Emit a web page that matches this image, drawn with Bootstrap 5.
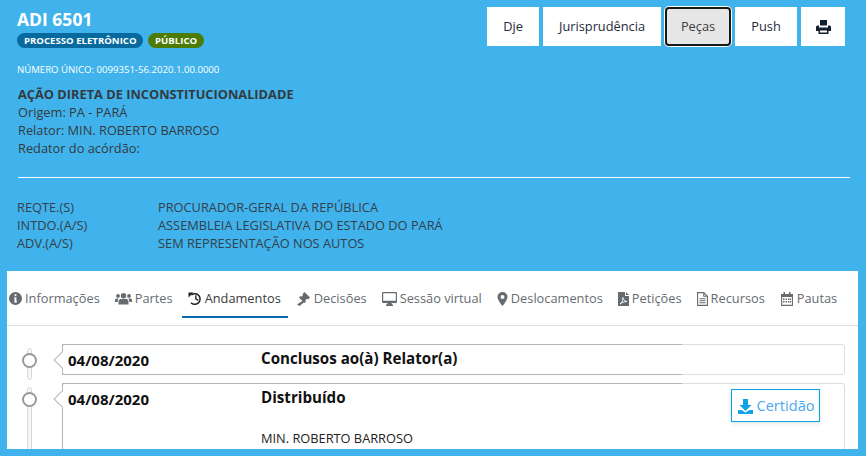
<!DOCTYPE html>
<html lang="pt-BR">
<head>
<meta charset="utf-8">
<title>ADI 6501</title>
<link rel="stylesheet" href="https://cdn.jsdelivr.net/npm/bootstrap@5.3.0/dist/css/bootstrap.min.css">
<style>
html,body{height:456px;overflow:hidden}
body{background:#41b3ec;font-family:"Open Sans","Liberation Sans",sans-serif;color:#373a3c;font-size:12.8px}
.shell{height:456px;display:flex;flex-direction:column;padding:0 8px 7px 7px}
.head{height:271px;flex:none;padding:8px 8px 0 10px;display:flex;flex-direction:column}
.toprow{display:flex;justify-content:space-between;align-items:flex-start}
.proc{font-size:17.5px;font-weight:700;color:#fff;line-height:22px}
.pills{display:flex;gap:5px;margin-top:3px}
.pill{font-size:9.6px;font-weight:700;color:#fff;line-height:15px;height:15px;padding:0 7px;border-radius:8px}
.pill-a{background:#066a9e;padding:0 6.5px 0 7px}
.pill-b{background:#4d7c06}
.acts{display:flex;gap:4px;margin-top:-1px;margin-right:5px}
.acts .btn{height:39px;background:#fff;border:0;border-radius:0;color:#1e2c3a;font-size:12.8px;padding:0;display:flex;align-items:center;justify-content:center}
.b1{width:52px}.b2{width:118px}.b4{width:62px}.b5{width:44px}
.acts .b3{width:66px;background:#e6e6e6;border:2px solid #16181a;border-radius:4px;box-shadow:0 0 0 1px #fff;color:#3c3c3c}
.uniq{font-size:9.6px;color:#fff;line-height:14px;margin-top:15px}
.desc{margin-top:8px;font-size:12.8px;line-height:18px;padding-left:1px;color:#333a40}
.desc strong{font-weight:700}
.sep{height:1px;background:#fff;margin:20px 0 0 1px;flex:none;opacity:.95}
.partes{margin-top:20px;line-height:18px;font-size:12.8px;color:#34404a}
.parte{display:flex}
.parte span:first-child{width:141px;flex:none}
.panel{flex:1;background:#fff;overflow:hidden;min-height:0}
.tabs{height:55px;border-bottom:1px solid #ddd;display:flex;padding-left:2px;flex-wrap:nowrap;margin:0}
.tabs .nav-link{color:#666b70;font-size:12.8px;padding:10px 0 0;height:47px;display:flex;align-items:center;gap:3px;white-space:nowrap;border-bottom:2px solid transparent;border-radius:0;margin-right:15px}
.tabs .nav-link svg{flex:none}
.tabs .nav-link.active{color:#373a3c;border-bottom-color:#0b69ae;padding:10px 7px 0 6px;margin:0 9px 0 -6px}
.feed{padding-top:18px;display:flex;flex-direction:column;gap:8px}
.event{display:flex;position:relative;padding-left:55px;padding-right:13px}
.node{position:absolute;left:15px;top:9px;width:15px;height:15px;border-radius:50%;border:2px solid #999;background:#fff;z-index:2}
.rail{position:absolute;left:20px;top:4px;bottom:-5px;width:5px;border:1px solid #d8d8d8;background:#f7f7f7;border-radius:3px;z-index:1}
.box{position:relative;flex:1;display:flex;min-height:31px;border:1px solid #ddd;border-radius:3px;background:#fff;padding-left:5px}
.box::before{content:"";position:absolute;left:0;right:162px;top:-1px;height:1px;background:#b5b5b5}
.box::after{content:"";position:absolute;left:-1px;top:-1px;bottom:-1px;width:1px;background:#b5b5b5}
.arrow{position:absolute;left:-7px;top:9px;width:12px;height:12px;background:#fff;border-left:1px solid #b5b5b5;border-bottom:1px solid #b5b5b5;transform:rotate(45deg);z-index:1}
.tline{position:absolute;left:0;right:162px;bottom:-1px;height:1px;background:#b5b5b5}
.when{width:193px;flex:none;font-size:15px;font-weight:700;color:#111;line-height:20px;padding-top:5px;position:relative;z-index:2}
.what{font-size:15.15px;font-weight:700;color:#111;line-height:20px;padding-top:3px}
.who{font-size:12.8px;font-weight:400;color:#222;line-height:18px;margin-top:22px}
.tall{height:110px}
.box .cert{position:absolute;right:24px;top:5px;width:89px;height:33px;border:0;border-radius:0;background:#fff;color:#4ca6f0;font-size:14.6px;padding:1px 0 0 2px;display:flex;align-items:center;justify-content:center;gap:3px;box-shadow:inset 0 0 0 1px #05a5e6,0 2px 4px rgba(0,0,0,.1);transition:none}
</style>
</head>
<body>
<div class="shell">
  <header class="head">
    <div class="toprow">
      <div>
        <div class="proc">ADI 6501</div>
        <div class="pills"><span class="pill pill-a">PROCESSO ELETRÔNICO</span><span class="pill pill-b">PÚBLICO</span></div>
      </div>
      <div class="acts">
        <button type="button" class="btn b1">Dje</button>
        <button type="button" class="btn b2">Jurisprudência</button>
        <button type="button" class="btn b3">Peças</button>
        <button type="button" class="btn b4">Push</button>
        <button type="button" class="btn b5" aria-label="Imprimir"><svg width="15" height="14" viewBox="0 0 15 14"><path fill="#14202c" fill-rule="evenodd" d="M4 0h7v5.500H4zM1.500 5.500H3V7.500h9V5.500h1.500A1.500 1.500 0 0 1 15 7v4h-2.500v3h-10v-3H0V7a1.500 1.500 0 0 1 1.500-1.500zM4 10.500V12.500h7V10.500z"/></svg></button>
      </div>
    </div>
    <div class="uniq">NÚMERO ÚNICO: 0099351-56.2020.1.00.0000</div>
    <div class="desc">
      <strong>AÇÃO DIRETA DE INCONSTITUCIONALIDADE</strong><br>
      Origem: PA - PARÁ<br>
      Relator: MIN. ROBERTO BARROSO<br>
      Redator do acórdão:
    </div>
    <div class="sep"></div>
    <div class="partes">
      <div class="parte"><span>REQTE.(S)</span><span>PROCURADOR-GERAL DA REPÚBLICA</span></div>
      <div class="parte"><span>INTDO.(A/S)</span><span>ASSEMBLEIA LEGISLATIVA DO ESTADO DO PARÁ</span></div>
      <div class="parte"><span>ADV.(A/S)</span><span>SEM REPRESENTAÇÃO NOS AUTOS</span></div>
    </div>
  </header>
  <main class="panel">
    <nav class="nav tabs">
      <a class="nav-link" href="#"><svg width="13" height="13" viewBox="0 0 14 14"><path fill="#666b70" fill-rule="evenodd" d="M7 0a7 7 0 1 1 0 14A7 7 0 0 1 7 0zM6 2.500v2h2v-2zM5.500 6v1.200H6V10h-.5v1.200h3V10H8V6z"/></svg>Informações</a>
      <a class="nav-link" href="#"><svg width="17" height="13" viewBox="0 0 17 13"><path fill="#666b70" d="M8.500 1a2.700 2.700 0 1 1 0 5.400 2.700 2.700 0 0 1 0-5.400zM3 2a1.900 1.900 0 1 1 0 3.800A1.900 1.900 0 0 1 3 2zM14 2a1.900 1.900 0 1 1 0 3.800A1.900 1.900 0 0 1 14 2zM5 7h7l1.500 2v3.500h-10V9zM0 7.500 1.500 6.500 3.500 6.500 2.500 10H0zM13.500 6.500h2L17 7.500V10h-2.500z"/></svg>Partes</a>
      <a class="nav-link active" href="#"><svg width="14" height="13" viewBox="0 0 14 13"><path fill="none" stroke="#222" stroke-width="1.500" d="M3.400 2.900A5.300 5.300 0 1 1 3 10.700"/><path fill="none" stroke="#222" stroke-width="1.300" d="M7.800 3.300V6.900L10.300 8.400"/><path fill="#222" d="M.5 .5 5.500 .5 .5 5.500z"/></svg>Andamentos</a>
      <a class="nav-link" href="#"><svg width="14" height="14" viewBox="0 0 14 14"><path fill="#666b70" d="M7.500 0 13 5.500 11 7.500 10 6.800 8.200 8.600 9 9.500 7.500 11 2 5.500 3.500 4 4.300 4.800 6.100 3 5.500 2zM6 8.500 7.500 10 2.500 14 0 12.500z"/></svg>Decisões</a>
      <a class="nav-link" href="#"><svg width="15" height="14" viewBox="0 0 15 14"><path fill="#666b70" fill-rule="evenodd" d="M1 0h13a1 1 0 0 1 1 1v9a1 1 0 0 1-1 1H9.500l.5 1.500h1V14H4v-1.500h1L5.500 11H1a1 1 0 0 1-1-1V1a1 1 0 0 1 1-1zM1.200 1.200v7.600h12.600V1.200z"/></svg>Sessão virtual</a>
      <a class="nav-link" href="#"><svg width="11" height="14" viewBox="0 0 11 14"><path fill="#666b70" fill-rule="evenodd" d="M5.500 0a5 5 0 0 1 5 5c0 2.500-3 6.500-5 9-2-2.500-5-6.500-5-9a5 5 0 0 1 5-5zm0 3a2 2 0 1 0 0 4 2 2 0 0 0 0-4z"/></svg>Deslocamentos</a>
      <a class="nav-link" href="#"><svg width="11" height="14" viewBox="0 0 11 14"><path fill="#666b70" d="M0 0h7v4h4v10H0zM8 0l3 3H8z"/><path fill="none" stroke="#fff" stroke-width=".9" d="M2 12c2-1 3-4 2.800-6.500C5.500 8 7 9.500 9 9.500 6.500 9.500 4 10.500 2 12z"/></svg>Petições</a>
      <a class="nav-link" href="#"><svg width="11" height="14" viewBox="0 0 11 14"><path fill="none" stroke="#666b70" stroke-width="1.100" d="M.6.6h6.200l3.600 3.600v9.200H.6zM6.800.6v3.600h3.600M2.500 6.800h6M2.500 8.800h6M2.500 10.800h6"/></svg>Recursos</a>
      <a class="nav-link" href="#"><svg width="14" height="14" viewBox="0 0 12 14"><path fill="none" stroke="#666b70" stroke-width="1.100" d="M.6 2.500h10.800v10.900H.6z"/><path fill="#666b70" d="M0 2h12v3H0zM2.500 0h1.500v3H2.500zM8 0h1.500v3H8zM2 6.500h1.500V8H2zM4.500 6.500H6V8H4.500zM7 6.500h1.500V8H7zM9 6.500h1V8H9zM2 9h1.500v1.500H2zM4.500 9H6v1.500H4.500zM7 9h1.500v1.500H7zM9 9h1v1.500H9z"/></svg>Pautas</a>
    </nav>
    <div class="feed">
      <div class="event">
        <span class="rail"></span><span class="node"></span>
        <div class="box"><span class="arrow"></span><span class="tline"></span>
          <div class="when">04/08/2020</div>
          <div class="what">Conclusos ao(à) Relator(a)</div>
        </div>
      </div>
      <div class="event tall">
        <span class="rail"></span><span class="node"></span>
        <div class="box"><span class="arrow"></span>
          <div class="when">04/08/2020</div>
          <div class="what">Distribuído<div class="who">MIN. ROBERTO BARROSO</div></div>
          <button type="button" class="btn cert"><svg width="15" height="15" viewBox="0 0 15 15"><path fill="#12a3e6" d="M5 0h5v6h3.500L7.500 12 1.500 6H5zM0 11h3.500l4 2.500 4-2.500H15v4H0z"/></svg>Certidão</button>
        </div>
      </div>
    </div>
  </main>
</div>
</body>
</html>
